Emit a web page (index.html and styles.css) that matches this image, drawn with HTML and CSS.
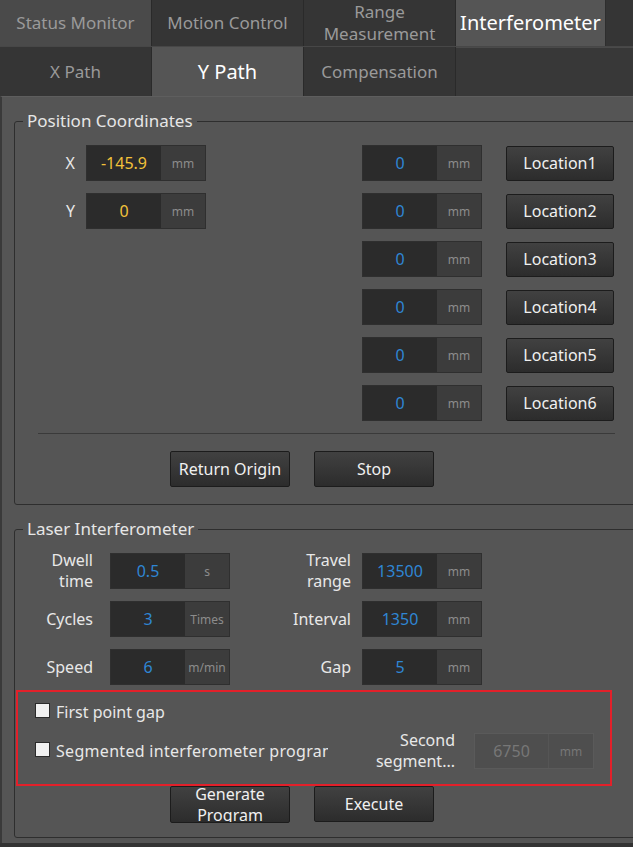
FILE: index.html
```html
<!DOCTYPE html>
<html lang="en">

<head>
    <meta charset="UTF-8">
    <title>Interferometer</title>
    <link rel="stylesheet" href="styles.css">
</head>

<body>
    <div class="tabs top-tabs">
        <div class="tab dim">Status Monitor</div>
        <div class="tab">Motion Control</div>
        <div class="tab two-line">Range<br>Measurement</div>
        <div class="tab active">Interferometer</div>
        <div class="tab-fill"></div>
    </div>

    <div class="tabs sub-tabs">
        <div class="tab">X Path</div>
        <div class="tab active">Y Path</div>
        <div class="tab">Compensation</div>
        <div class="tab-fill"></div>
    </div>

    <div class="panel">
        <fieldset class="group">
            <legend>Position Coordinates</legend>
            <div class="pos-grid">
                <div class="lbl c1 r1">X</div>
                <div class="field c2 r1"><span class="val yellow">-145.9</span><span class="unit">mm</span></div>
                <div class="lbl c1 r2">Y</div>
                <div class="field c2 r2"><span class="val yellow">0</span><span class="unit">mm</span></div>

                <div class="field c4 r1"><span class="val">0</span><span class="unit">mm</span></div>
                <button class="btn loc c6 r1">Location1</button>
                <div class="field c4 r2"><span class="val">0</span><span class="unit">mm</span></div>
                <button class="btn loc c6 r2">Location2</button>
                <div class="field c4 r3"><span class="val">0</span><span class="unit">mm</span></div>
                <button class="btn loc c6 r3">Location3</button>
                <div class="field c4 r4"><span class="val">0</span><span class="unit">mm</span></div>
                <button class="btn loc c6 r4">Location4</button>
                <div class="field c4 r5"><span class="val">0</span><span class="unit">mm</span></div>
                <button class="btn loc c6 r5">Location5</button>
                <div class="field c4 r6"><span class="val">0</span><span class="unit">mm</span></div>
                <button class="btn loc c6 r6">Location6</button>
            </div>
            <div class="sep"></div>
            <div class="actions">
                <button class="btn">Return Origin</button>
                <button class="btn">Stop</button>
            </div>
        </fieldset>

        <fieldset class="group laser">
            <legend>Laser Interferometer</legend>
            <div class="laser-grid">
                <div class="lbl left">Dwell<br>time</div>
                <div class="field"><span class="val">0.5</span><span class="unit">s</span></div>
                <div class="lbl right">Travel<br>range</div>
                <div class="field"><span class="val">13500</span><span class="unit">mm</span></div>

                <div class="lbl left">Cycles</div>
                <div class="field"><span class="val">3</span><span class="unit">Times</span></div>
                <div class="lbl right">Interval</div>
                <div class="field"><span class="val">1350</span><span class="unit">mm</span></div>

                <div class="lbl left">Speed</div>
                <div class="field"><span class="val">6</span><span class="unit">m/min</span></div>
                <div class="lbl right">Gap</div>
                <div class="field"><span class="val">5</span><span class="unit">mm</span></div>
            </div>

            <div class="highlight">
                <div class="check-row">
                    <span class="box"></span>
                    <span class="check-text">First point gap</span>
                </div>
                <div class="check-row second">
                    <div class="check-clip">
                        <span class="box"></span>
                        <span class="check-text wide">Segmented interferometer program</span>
                    </div>
                    <div class="seg-label">Second<br>segment...</div>
                    <div class="field off"><span class="val">6750</span><span class="unit">mm</span></div>
                </div>
            </div>

            <div class="actions tight">
                <button class="btn wrap">Generate<br>Program</button>
                <button class="btn">Execute</button>
            </div>
        </fieldset>
    </div>
</body>

</html>
```

FILE: styles.css
```css
* {
    box-sizing: border-box;
}

body {
    margin: 0;
    width: 633px;
    height: 847px;
    overflow: hidden;
    background-color: #333;
    color: #e8e8e8;
    font-family: "Noto Sans", "Liberation Sans", sans-serif;
    font-size: 16px;
}

/* tab bars */
.tabs {
    display: flex;
    background-color: #353535;
}

.top-tabs {
    height: 47px;
    border-bottom: 1px solid #474747;
}

.sub-tabs {
    height: 49px;
}

.tab {
    width: 152px;
    flex-shrink: 0;
    display: flex;
    align-items: center;
    justify-content: center;
    text-align: center;
    color: #9a9a9a;
    font-size: 17px;
    border-right: 1px solid #2a2a2a;
    line-height: 22px;
}

.tab.dim {
    background-color: #4a4a4a;
}

.tab.active {
    background-color: #555;
    color: #fff;
    font-size: 20px;
}

.top-tabs .tab.active {
    width: 150px;
    border-right-color: #2e2e2e;
}

.tab-fill {
    flex: 1;
    background-color: #353535;
}

.sub-tabs .tab-fill {
    background-color: #383838;
    border-top: 1px solid #4a4a4a;
}

/* main panel */
.panel {
    background-color: #555;
    border-left: 2px solid #3a3a3a;
    border-top: 1px solid #5e5e5e;
    padding: 13px 0 5px 0;
    overflow: hidden;
}

.group {
    margin: 0 -40px 0 12px;
    padding: 13px 0 17px 0;
    border: 1px solid #2e2e2e;
    border-radius: 3px;
    min-width: 0;
}

.group legend {
    margin-left: 8px;
    padding: 0 4px;
    font-size: 17px;
    line-height: 22px;
    color: #e6e6e6;
}

.laser {
    margin-top: 13px;
    padding-bottom: 14px;
}

.pos-grid {
    display: grid;
    grid-template-columns: 71px 120px 156px 120px 24px 108px;
    grid-template-rows: repeat(6, 36px);
    row-gap: 12px;
}

.c1 { grid-column: 1; }
.c2 { grid-column: 2; }
.c4 { grid-column: 4; }
.c6 { grid-column: 6; }
.r1 { grid-row: 1; }
.r2 { grid-row: 2; }
.r3 { grid-row: 3; }
.r4 { grid-row: 4; }
.r5 { grid-row: 5; }
.r6 { grid-row: 6; }

.lbl {
    display: flex;
    align-items: center;
    justify-content: flex-end;
    text-align: right;
    padding-right: 11px;
    line-height: 21px;
}

.lbl.left {
    padding-right: 17px;
}

/* value + unit box */
.field {
    display: flex;
    width: 120px;
    height: 36px;
    border: 1px solid #2f2f2f;
}

.field .val {
    width: 74px;
    display: flex;
    align-items: center;
    justify-content: center;
    background-color: #2b2b2b;
    color: #2f86d4;
    font-size: 16px;
}

.field .val.yellow {
    color: #f2c23a;
}

.field .unit {
    flex: 1;
    display: flex;
    align-items: center;
    justify-content: center;
    background-color: #3c3c3c;
    color: #8c8c8c;
    font-size: 12px;
}

.field.off {
    border-color: #5a5a5a;
}

.field.off .val,
.field.off .unit {
    background-color: #4e4e4e;
    color: #777;
}

.field.off .val {
    border-right: 1px solid #555;
}

.btn {
    width: 120px;
    height: 36px;
    padding: 0;
    background: linear-gradient(#414141, #2c2c2c);
    border: 1px solid #1c1c1c;
    border-radius: 2px;
    color: #f0f0f0;
    font-family: inherit;
    font-size: 16px;
    line-height: 21px;
}

.btn.loc {
    width: 108px;
    height: 35px;
    margin-top: 1px;
}

.btn.wrap {
    display: flex;
    align-items: center;
    justify-content: center;
    overflow: hidden;
    height: 37px;
}

.sep {
    margin: 12px 0 0 23px;
    width: 577px;
    height: 1px;
    background-color: #3a3a3a;
}

.actions {
    display: flex;
    gap: 24px;
    padding-left: 155px;
    margin-top: 17px;
}

.actions.tight {
    margin-top: 0;
}

/* laser section */
.laser-grid {
    display: grid;
    grid-template-columns: 95px 120px 132px 120px;
    grid-template-rows: repeat(3, 36px);
    row-gap: 12px;
}

.highlight {
    margin: 5px 0 0 1px;
    width: 596px;
    height: 96px;
    border: 2px solid #e3202a;
    padding: 5px 0 0 17px;
}

.check-row {
    display: flex;
    align-items: center;
    height: 30px;
}

.check-row.second {
    margin-top: 6px;
    height: 36px;
}

.box {
    width: 15px;
    height: 15px;
    flex-shrink: 0;
    margin-right: 6px;
    margin-top: -4px;
    background-color: #f0f0f0;
    border: 1px solid #2a2a2a;
}

.check-clip {
    width: 293px;
    display: flex;
    align-items: center;
    overflow: hidden;
    white-space: nowrap;
}

.check-text.wide {
    letter-spacing: 0.3px;
}

.seg-label {
    width: 127px;
    margin-right: 19px;
    text-align: right;
    line-height: 21px;
}
```
